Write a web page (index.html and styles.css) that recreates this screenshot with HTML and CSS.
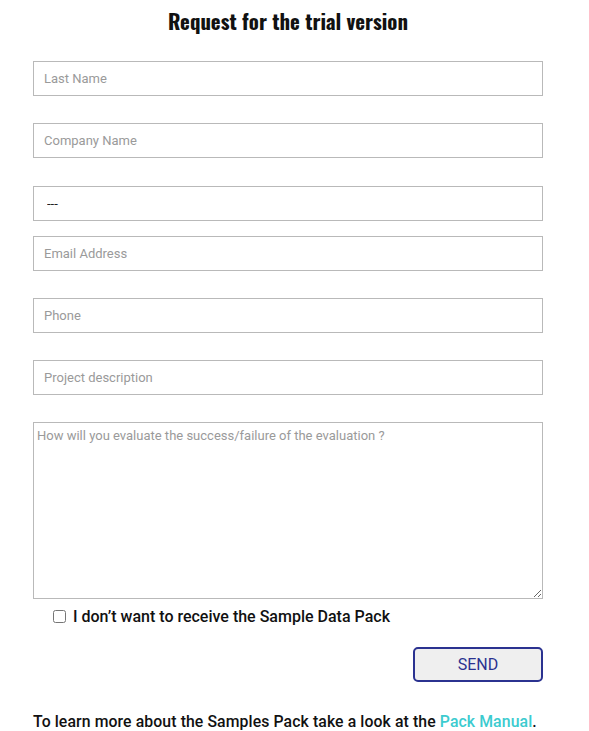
FILE: index.html
```html
<!DOCTYPE html>
<html lang="en">
<head>
<meta charset="utf-8">
<title>Request for the trial version</title>
<link rel="stylesheet" href="styles.css">
</head>
<body>
<main class="page">
  <h1 class="title">Request for the trial version</h1>
  <form class="form">
    <input class="field" type="text" placeholder="Last Name">
    <input class="field" type="text" placeholder="Company Name">
    <select class="field select-field">
      <option>---</option>
    </select>
    <input class="field" type="email" placeholder="Email Address">
    <input class="field" type="text" placeholder="Phone">
    <input class="field" type="text" placeholder="Project description">
    <textarea class="area" placeholder="How will you evaluate the success/failure of the evaluation ?"></textarea>
    <label class="check-row">
      <input class="check" type="checkbox">
      <span>I don’t want to receive the Sample Data Pack</span>
    </label>
    <div class="actions">
      <button class="send" type="button">SEND</button>
    </div>
  </form>
  <p class="note">To learn more about the Samples Pack take a look at the <a class="link" href="#">Pack Manual</a>.</p>
</main>
</body>
</html>
```

FILE: styles.css
```css
html, body {
  margin: 0;
  padding: 0;
  background: #ffffff;
}

.page {
  width: 510px;
  margin-left: 33px;
  font-family: Roboto, "Liberation Sans", sans-serif;
  color: #000;
}

.title {
  margin: 0;
  height: 61px;
  padding-top: 6px;
  box-sizing: border-box;
  text-align: center;
  font-family: Oswald, "Liberation Sans Narrow", "DejaVu Sans Condensed", "Roboto Condensed", sans-serif;
  font-weight: 700;
  font-size: 20.8px;
  line-height: 30px;
  color: #111;
}

.form {
  display: flex;
  flex-direction: column;
}

.field {
  display: block;
  box-sizing: border-box;
  width: 510px;
  height: 35px;
  margin: 0 0 27px 0;
  padding: 0 10px;
  border: 1px solid #b9b9b9;
  border-radius: 0;
  background: #fff;
  font-family: Roboto, "Liberation Sans", sans-serif;
  font-size: 13px;
  color: #222;
  outline: none;
}

.field::placeholder,
.area::placeholder {
  color: #9a9a9a;
  opacity: 1;
}

.select-field {
  -webkit-appearance: none;
  appearance: none;
  margin-top: 1px;
  margin-bottom: 15px;
  padding-left: 13px;
  color: #222;
}

.area {
  display: block;
  box-sizing: border-box;
  width: 510px;
  height: 177px;
  margin: 0;
  padding: 5px 3px;
  border: 1px solid #b9b9b9;
  border-radius: 0;
  font-family: Roboto, "Liberation Sans", sans-serif;
  font-size: 13px;
  line-height: 15px;
  resize: both;
  outline: none;
}

.check-row {
  display: flex;
  align-items: center;
  gap: 7px;
  height: 20px;
  margin: 7px 0 0 20px;
  font-size: 16px;
  font-weight: 500;
  color: #111;
}

.check {
  width: 13px;
  height: 13px;
  margin: 0;
}

.actions {
  display: flex;
  justify-content: flex-end;
  margin-top: 21px;
}

.send {
  box-sizing: border-box;
  width: 130px;
  height: 35px;
  border: 2px solid #2b3290;
  border-radius: 5px;
  background: #efefef;
  color: #2b3290;
  font-family: Roboto, "Liberation Sans", sans-serif;
  font-size: 16px;
  padding: 0;
}

.note {
  margin: 30px 0 0 0;
  font-size: 15.8px;
  font-weight: 500;
  letter-spacing: 0.1px;
  line-height: 19px;
  color: #111;
  white-space: nowrap;
}

.link {
  color: #3ccbcf;
  text-decoration: none;
}
```
